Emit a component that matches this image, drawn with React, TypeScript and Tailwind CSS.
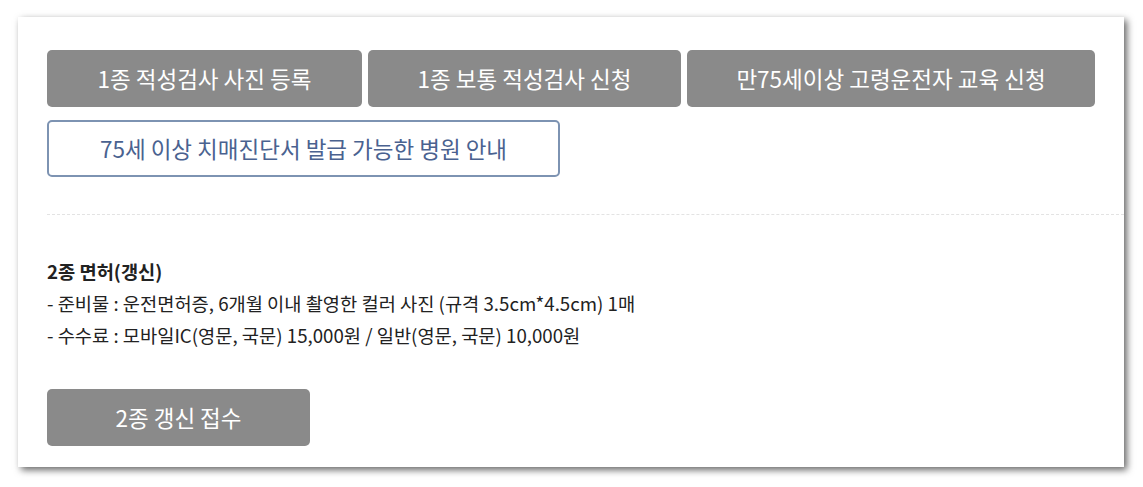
// 적성검사/갱신 안내 카드
const GRAY_BTN =
  'h-[57px] rounded-[5px] bg-[#8a8a8a] text-white text-[22.5px] flex items-center justify-center'

export default function App() {
  return (
    <div className="w-[1143px] h-[487px] bg-white pt-[17px] pl-[18px] font-['Noto_Sans_CJK_KR','Noto_Sans',sans-serif]">
      <div className="w-[1106px] h-[450px] bg-white shadow-[3px_3px_7px_rgba(0,0,0,0.6)] pt-[33px] pl-[29px]">
        {/* 상단 버튼 */}
        <div className="flex gap-[6px]">
          <button className={`${GRAY_BTN} w-[315px]`}>1종 적성검사 사진 등록</button>
          <button className={`${GRAY_BTN} w-[313px]`}>1종 보통 적성검사 신청</button>
          <button className={`${GRAY_BTN} w-[408px]`}>만75세이상 고령운전자 교육 신청</button>
        </div>
        <button className="mt-[13px] w-[513px] h-[57px] rounded-[5px] border-2 border-[#7d93b2] text-[#4a6290] text-[22.5px] flex items-center justify-center">
          75세 이상 치매진단서 발급 가능한 병원 안내
        </button>

        <div className="mt-[37px] border-t border-dashed border-[#e3e3e3]" />

        {/* 2종 안내 */}
        <div className="mt-[40px] text-[18.7px] leading-[32px] text-[#222]">
          <p className="font-bold">2종 면허(갱신)</p>
          <p>- 준비물 : 운전면허증, 6개월 이내 촬영한 컬러 사진 (규격 3.5cm*4.5cm) 1매</p>
          <p>- 수수료 : 모바일IC(영문, 국문) 15,000원 / 일반(영문, 국문) 10,000원</p>
        </div>

        <button className={`${GRAY_BTN} mt-[38px] w-[263px]`}>2종 갱신 접수</button>
      </div>
    </div>
  )
}
